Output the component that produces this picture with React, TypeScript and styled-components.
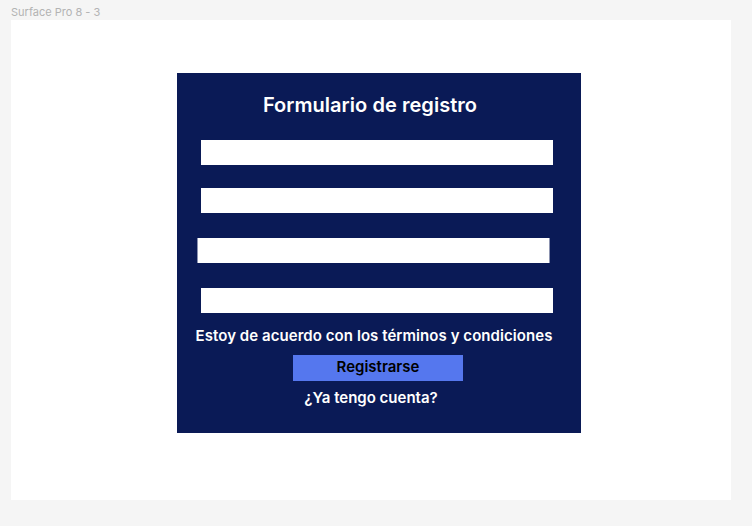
import styled, { createGlobalStyle } from "styled-components";

const GlobalStyle = createGlobalStyle`
  html, body {
    margin: 0;
    padding: 0;
    background: #f5f5f5;
    font-family: Inter, "Noto Sans", sans-serif;
  }
`;

const fields = [
  { top: 23, left: 24, width: 352 },
  { top: 23, left: 24, width: 352 },
  { top: 25, left: 20, width: 353 },
  { top: 25, left: 24, width: 352 },
];

const App = () => {
  return (
    <>
      <GlobalStyle />
      <Canvas>
        <FrameLabel>Surface Pro 8 - 3</FrameLabel>
        <Frame>
          <Card>
            <Title>Formulario de registro</Title>
            {fields.map((f, i) => (
              <Field
                key={i}
                type="text"
                $top={f.top}
                $left={f.left}
                $width={f.width}
                $framed={i === 2}
              />
            ))}
            <Terms>Estoy de acuerdo con los términos y condiciones</Terms>
            <SubmitButton type="button">Registrarse</SubmitButton>
            <LoginLink>¿Ya tengo cuenta?</LoginLink>
          </Card>
        </Frame>
      </Canvas>
    </>
  );
};

const Canvas = styled.div`
  width: 752px;
  height: 526px;
  box-sizing: border-box;
  padding: 4px 0 0 11px;
  display: flex;
  flex-direction: column;
`;

const FrameLabel = styled.div`
  font-size: 11px;
  line-height: 16px;
  color: #b3b3b3;
  height: 16px;
`;

const Frame = styled.div`
  width: 720px;
  height: 480px;
  background: #ffffff;
  display: flex;
  padding: 53px 0 0 166px;
  box-sizing: border-box;
`;

const Card = styled.div`
  width: 404px;
  height: 360px;
  background: #0a1a56;
  display: flex;
  flex-direction: column;
  align-items: flex-start;
`;

const Title = styled.h1`
  margin: 20px 18px 0 0;
  align-self: center;
  font-size: 20px;
  line-height: 24px;
  font-weight: 600;
  letter-spacing: 0.05px;
  color: #ffffff;
`;

const Field = styled.input<{
  $top: number;
  $left: number;
  $width: number;
  $framed: boolean;
}>`
  margin: ${({ $top }) => $top}px 0 0 ${({ $left }) => $left}px;
  width: ${({ $width }) => $width}px;
  height: 25px;
  box-sizing: border-box;
  padding: 0;
  border: none;
  border-left: ${({ $framed }) => ($framed ? "1px solid #8c93b0" : "none")};
  border-right: ${({ $framed }) => ($framed ? "1px solid #8c93b0" : "none")};
  background: #ffffff;
  outline: none;
`;

const Terms = styled.p`
  margin: 14px 10px 0 0;
  align-self: center;
  font-size: 15px;
  line-height: 18px;
  font-weight: 600;
  letter-spacing: 0.06px;
  color: #ffffff;
  white-space: nowrap;
`;

const SubmitButton = styled.button`
  margin: 10px 2px 0 0;
  align-self: center;
  width: 170px;
  height: 26px;
  padding: 0 0 3px;
  border: none;
  background: #5577ee;
  font-family: Inter, "Noto Sans", sans-serif;
  font-size: 15px;
  line-height: 18px;
  font-weight: 600;
  color: #000000;
  cursor: pointer;
`;

const LoginLink = styled.p`
  margin: 8px 16px 0 0;
  align-self: center;
  font-size: 15px;
  line-height: 18px;
  font-weight: 600;
  color: #ffffff;
`;

export default App;
